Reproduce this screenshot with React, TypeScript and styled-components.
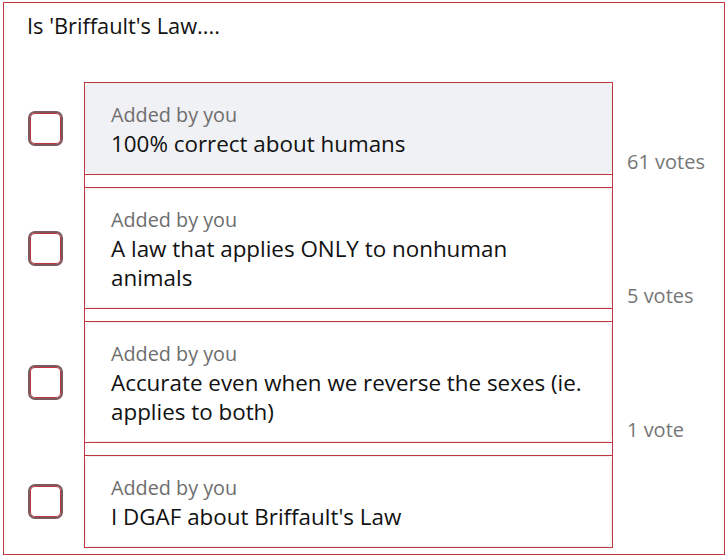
import styled, { createGlobalStyle } from "styled-components";

const GlobalStyle = createGlobalStyle`
    html, body {
        margin: 0;
        padding: 0;
        background: #fff;
    }
    body {
        font-family: "Open Sans", "Noto Sans", sans-serif;
        color: #111;
    }
`

const RED = "#c0363e";

const Panel = styled.div`
    margin: 2px 3px 0 3px;
    width: 722px;
    height: 553px;
    box-sizing: border-box;
    border: 1px solid ${RED};
    padding: 8px 0 0 23px;
`

const Title = styled.div`
    font-size: 21.8px;
    line-height: 29px;
    color: #111;
    margin-bottom: 42px;
`

const List = styled.div`
    display: flex;
    flex-direction: column;
`

const Row = styled.div`
    display: grid;
    grid-template-columns: 57px 529px 1fr;
`

const CheckCell = styled.div<{ $last?: boolean }>`
    display: flex;
    align-items: center;
    padding-bottom: ${(p) => (p.$last ? 0 : 12)}px;
    padding-left: 1px;
`

const Checkbox = styled.span`
    display: block;
    width: 35px;
    height: 35px;
    box-sizing: border-box;
    border: 2px solid #7a5a5f;
    border-radius: 7px;
    box-shadow: inset 0 0 0 1px ${RED};
    background: #fff;
`

const CardCell = styled.div<{ $last?: boolean }>`
    border-left: 1px solid ${RED};
    border-right: 1px solid ${RED};
    padding-bottom: ${(p) => (p.$last ? 0 : 12)}px;
`

const Card = styled.div<{ $active?: boolean }>`
    border-top: 1px solid ${RED};
    border-bottom: 1px solid ${RED};

    .inner {
        padding: 16px 20px 15px 25px;
        border-radius: 6px;
        border: 1px solid #ececef;
        background: ${(p) => (p.$active ? "#f0f1f4" : "#fff")};
    }
`

const Author = styled.div`
    font-size: 19.8px;
    line-height: 29px;
    color: #6e6e6e;
`

const Label = styled.div`
    font-size: 22.4px;
    line-height: 29px;
    color: #111;
`

const Votes = styled.div<{ $last?: boolean }>`
    align-self: end;
    padding-left: 14px;
    margin-bottom: ${(p) => (p.$last ? 0 : 13)}px;
    font-size: 20px;
    line-height: 24px;
    color: #767676;
`

interface IOption {
    text: string;
    votes?: string;
    active?: boolean;
}

const options: IOption[] = [
    { text: "100% correct about humans", votes: "61 votes", active: true },
    { text: "A law that applies ONLY to nonhuman animals", votes: "5 votes" },
    { text: "Accurate even when we reverse the sexes (ie. applies to both)", votes: "1 vote" },
    { text: "I DGAF about Briffault's Law" },
];

export default function App() {
    return (
        <>
            <GlobalStyle />
            <Panel>
                <Title>Is 'Briffault's Law....</Title>
                <List>
                    {options.map((o, i) => {
                        const last = i == options.length - 1;
                        return (
                            <Row key={i}>
                                <CheckCell $last={last}>
                                    <Checkbox />
                                </CheckCell>
                                <CardCell $last={last}>
                                    <Card $active={o.active}>
                                        <div className="inner">
                                            <Author>Added by you</Author>
                                            <Label>{o.text}</Label>
                                        </div>
                                    </Card>
                                </CardCell>
                                <Votes $last={last}>{o.votes}</Votes>
                            </Row>
                        );
                    })}
                </List>
            </Panel>
        </>
    );
}
